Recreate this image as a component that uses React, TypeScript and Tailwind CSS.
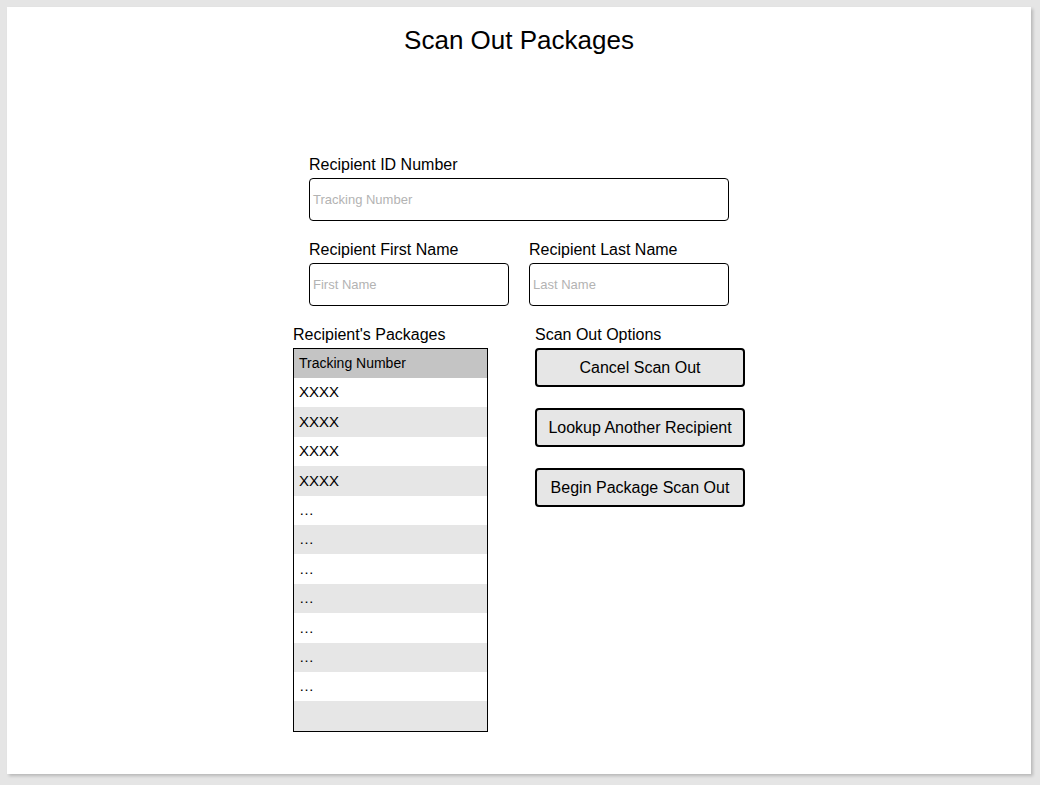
import React from 'react';

const rows = ['XXXX', 'XXXX', 'XXXX', 'XXXX', '…', '…', '…', '…', '…', '…', '…', ''];

function TextField({ label, placeholder, width }: { label: string; placeholder: string; width: string }) {
  return (
    <div className={`flex flex-col gap-[4px] ${width}`}>
      <span className="text-[16px] leading-[18px] pt-[1px] text-black">{label}</span>
      <div className="h-[43px] border border-black rounded-[4px] bg-white flex items-center pl-[3px]">
        <span className="text-[13px] text-[#b3b3b3]">{placeholder}</span>
      </div>
    </div>
  );
}

function OptionButton({ children }: { children: React.ReactNode }) {
  return (
    <button className="w-[210px] h-[39px] border-2 border-black rounded-[4px] bg-[#e6e6e6] text-[16px] text-black flex items-center justify-center">
      {children}
    </button>
  );
}

export default function App() {
  return (
    <div
      className="w-[1040px] h-[785px] bg-[#e5e5e5] pt-[7px] pl-[7px]"
      style={{ fontFamily: '"Liberation Sans", Arial, sans-serif' }}
    >
      <div className="w-[1024px] h-[767px] bg-white shadow-[2px_2px_3px_rgba(0,0,0,0.2)] flex flex-col items-center">
        <h1 className="mt-[19px] text-[26px] leading-[28px] text-black">Scan Out Packages</h1>

        <div className="mt-[101px] w-[420px] flex flex-col gap-[19px]">
          <TextField label="Recipient ID Number" placeholder="Tracking Number" width="w-[420px]" />
          <div className="flex gap-[20px]">
            <TextField label="Recipient First Name" placeholder="First Name" width="w-[200px]" />
            <TextField label="Recipient Last Name" placeholder="Last Name" width="w-[200px]" />
          </div>
        </div>

        <div className="mt-[19px] w-[452px] flex gap-[47px]">
          {/* Packages table */}
          <div className="flex flex-col gap-[4px] w-[195px]">
            <span className="text-[16px] leading-[18px] pt-[1px] text-black">Recipient's Packages</span>
            <div className="border border-black flex flex-col">
              <div className="h-[29px] bg-[#c4c4c4] flex items-center px-[5px] text-[14px] text-black">
                Tracking Number
              </div>
              {rows.map((r, i) => (
                <div
                  key={i}
                  className={`h-[29.4px] flex items-center px-[5px] text-[15px] text-black ${
                    i % 2 === 0 ? 'bg-white' : 'bg-[#e6e6e6]'
                  }`}
                >
                  {r}
                </div>
              ))}
            </div>
          </div>

          {/* Options */}
          <div className="flex flex-col gap-[4px]">
            <span className="text-[16px] leading-[18px] pt-[1px] text-black">Scan Out Options</span>
            <div className="flex flex-col gap-[21px]">
              <OptionButton>Cancel Scan Out</OptionButton>
              <OptionButton>Lookup Another Recipient</OptionButton>
              <OptionButton>Begin Package Scan Out</OptionButton>
            </div>
          </div>
        </div>
      </div>
    </div>
  );
}
